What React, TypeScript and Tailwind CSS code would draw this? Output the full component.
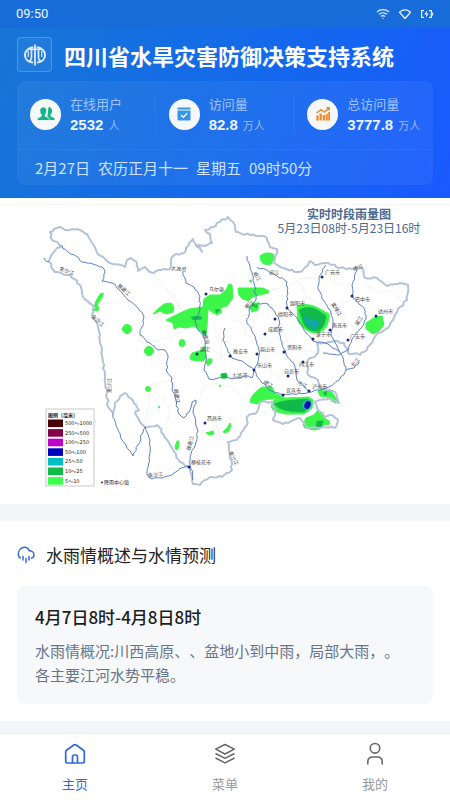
import React from 'react';

type Point = [number, number];

// Adds small kinks between points so that borders and rivers look natural
function wiggle(points: string, size = 1) {
  const pts = points.split(' ').map((p) => p.split(',').map(Number) as Point);
  let seed = 7;
  const rand = () => {
    seed = (seed * 16807) % 2147483647;
    return (seed / 2147483647 - 0.5) * 2 * size;
  };
  let d = `M${pts[0][0]} ${pts[0][1]}`;
  for (let i = 1; i < pts.length; i++) {
    const [ax, ay] = pts[i - 1];
    const [bx, by] = pts[i];
    const steps = Math.max(1, Math.round(Math.hypot(bx - ax, by - ay) / 3));
    for (let s = 1; s <= steps; s++) {
      const t = s / steps;
      const k = s === steps ? 0 : 1;
      d += `L${(ax + (bx - ax) * t + rand() * k).toFixed(1)} ${(ay + (by - ay) * t + rand() * k).toFixed(1)}`;
    }
  }
  return d;
}

const border =
  '49,262 53,253 57,248 62,246 52,240 50,232 54,229 60,227 65,230 72,229 80,230 87,234 91,241 97,253 108,262 125,267 127,260 131,258 137,263 138,271 145,267 153,273 158,270 170,269 172,257 176,254 184,253 189,243 193,239 196,246 202,252 198,245 205,246 212,243 210,234 205,230 213,227 220,222 228,217 233,222 236,232 250,235 260,236 267,238 270,247 277,249 274,263 283,268 298,272 303,270 310,261 315,265 328,263 340,268 353,269 362,268 365,278 377,278 387,286 400,283 408,285 407,300 400,307 393,320 388,328 377,333 373,341 367,350 360,355 348,353 344,343 334,341 317,343 318,353 307,362 308,375 318,380 320,388 335,392 339,403 330,398 315,402 318,410 325,417 332,415 338,420 335,428 323,427 307,428 300,418 283,424 273,420 275,412 272,402 260,402 257,412 247,417 247,425 238,438 228,442 230,455 232,470 222,477 210,477 200,485 193,484 190,468 180,462 172,448 164,435 157,425 145,427 140,422 135,413 139,410 133,401 125,393 115,403 113,413 108,407 105,378 103,362 102,350 98,327 92,315 95,308 83,297 80,285 70,275 55,272 49,262';

const rivers = [
  '44,258 49,262',
  '62,246 68,252 76,256 82,262 90,263 102,267 105,272 102,281 112,283 119,290 128,300 138,308 144,317 142,327 140,335 150,343 158,350 165,350 168,358 167,372 172,378 173,392 179,414 184,418 189,412 192,402 196,400 193,412 198,431 194,448 190,460 193,480',
  '113,413 116,426 122,440 133,456 138,445 145,427 150,440 149,458 147,474 152,479 162,478 174,473 188,466',
  '183,271 186,283 194,287 200,297 199,312 195,322 199,331 205,340 206,355 204,370 209,379 224,378 236,378 246,376 252,378 254,370',
  '247,256 250,266 254,283 256,300 249,310 247,323 255,336 259,350 258,362 254,370 262,383 272,391 283,395 294,394 309,392',
  '257,267 267,270 277,276 287,282 287,308 297,318 306,333 313,341 328,344 340,352',
  '258,303 268,304 275,312 279,320 279,333 282,345 286,354 295,367 297,380 309,392',
  '326,265 319,277 318,289 324,301 331,313 333,325 331,335 336,344 341,354 346,370',
  '357,270 352,285 353,298 364,308 366,319 360,329 352,339 348,350 339,355 323,353',
  '309,392 319,390 331,386 340,379 346,370 354,368 359,362',
  '225,328 223,340 228,352 232,358 242,361 254,370',
];

const counties = [
  '80,292 88,300 100,305 118,302',
  '155,275 168,291 178,303 180,315',
  '150,385 158,383 168,380 172,378',
  '148,385 150,398 147,412 144,422',
  '178,303 185,318 182,330 170,338 150,342',
  '214,327 222,340 220,355 226,365',
  '256,298 270,290 288,286 300,279 316,278',
  '230,318 242,324 246,335',
  '206,355 215,360 228,352',
  '200,400 203,388 214,384 231,387 240,395 246,405',
  '300,283 306,296 322,306 336,305 350,300',
  '330,279 340,285 351,284',
  '366,285 380,292 393,290 401,302',
  '340,306 345,318 338,330 336,340',
  '285,335 292,345 300,351 317,352',
  '262,334 270,343 266,356 272,372 282,380',
  '286,380 292,370 305,367',
  '220,410 216,425 220,438 228,442',
  '163,398 170,410 166,425',
];

const light = '#3df64a';
const mid = '#10b94a';

const cities: [string, number, number, number, number][] = [
  ['马尔康', 206, 294, 209, 291],
  ['康定', 197, 354, 200, 351],
  ['雅安市', 230, 356, 233, 353],
  ['眉山市', 257, 354, 260, 351],
  ['成都市', 265, 334, 268, 331],
  ['德阳市', 275, 319, 278, 316],
  ['绵阳市', 287, 308, 290, 305],
  ['广元市', 322, 277, 325, 274],
  ['巴中市', 352, 296, 355, 301],
  ['达州市', 376, 316, 378, 313],
  ['南充市', 330, 330, 332, 327],
  ['遂宁市', 313, 339, 316, 336],
  ['广安市', 348, 340, 350, 338],
  ['资阳市', 284, 352, 287, 349],
  ['内江市', 303, 362, 299, 366],
  ['自贡市', 288, 376, 284, 373],
  ['乐山市', 254, 370, 257, 367],
  ['宜宾市', 283, 395, 286, 392],
  ['泸州市', 309, 391, 312, 388],
  ['西昌市', 205, 423, 207, 420],
  ['攀枝花市', 189, 467, 191, 464],
];

const riverNames: [string, number, number, number][] = [
  ['金沙江', 59, 270, 20],
  ['雅砻江', 117, 286, 42],
  ['金沙江', 91, 317, 42],
  ['大渡河', 171, 270, 5],
  ['金沙江', 111, 393, -88],
  ['雅砻江', 174, 389, 80],
  ['大渡河', 202, 330, 75],
  ['大渡河', 232, 377, 0],
  ['岷江', 253, 273, 60],
  ['岷江', 246, 309, -30],
  ['涪江', 269, 274, 0],
  ['嘉陵江', 331, 304, 58],
  ['渠江', 358, 326, -60],
  ['南江', 354, 271, -20],
  ['岷江', 263, 383, 30],
  ['沱江', 297, 384, 25],
  ['长江', 353, 367, -45],
  ['雅砻江', 190, 451, -75],
  ['金沙江', 229, 452, 65],
  ['金沙江', 148, 477, -4],
];

const legend: [string, string][] = [
  ['500～1000', '#4a0008'],
  ['250～500', '#82004b'],
  ['100～250', '#c000c8'],
  ['50～100', '#0000c0'],
  ['25～50', '#00bcc4'],
  ['10～25', mid],
  ['5～10', '#3dff4d'],
];

function RainMap() {
  return (
    <svg viewBox="0 198 450 306" className="block w-full" role="img" aria-label="实时时段雨量图">
      <path d="M0 204.500H450" stroke="#f3fbf1" />

      <g fill="none" stroke="#e3dde3" strokeWidth="0.600" strokeDasharray="2 1">
        {counties.map((c, i) => (
          <path key={i} d={wiggle(c, 1)} />
        ))}
      </g>

      <g fill={light} stroke={light} strokeWidth="1" strokeLinejoin="round">
        <path d="M103 293L100 294L96 301L94 307L92 310L98 311L99 308L97 305L103 296Z" />
        <ellipse cx="127" cy="329" rx="4.500" ry="4.500" />
        <ellipse cx="149" cy="351" rx="4.500" ry="4.500" />
        <circle cx="148" cy="389" r="2.500" />
        <circle cx="159" cy="407" r="0.800" />
        <path d="M153 314L158 309L164 304L171 303L174 307L173 312L166 314L160 311Z" />
        <path d="M166 320L178 314L189 309L203 307L204 299L210 295L220 295L226 290L229 284L232 285L233 298L227 306L220 308L222 312L217 315L212 312L208 309L207 325L206 334L202 332L194 326L186 328L179 327L174 329L173 323Z" />
        <path d="M238 288L251 288L263 288L269 291L268 293L259 295L252 297L249 301L243 299L239 295Z" />
        <path d="M252 303L259 303L258 310L252 312L250 308Z" />
        <circle cx="250.500" cy="281" r="1" />
        <path d="M260 256Q266 251 273 254Q276 257 271 264Q264 266 261 261Z" />
        <ellipse cx="182" cy="343" rx="3" ry="3.500" />
        <path d="M190 357L192 353L202 350L204 346L206 358L203 361L191 360Z" />
        <path d="M206 362L208 359L212 359L212 362L208 366Z" />
        <path d="M221 374L227 374L227 378L221 378Z" />
        <circle cx="220" cy="386" r="0.800" />
        <path d="M250 402Q251 394 262 387L272 387L275 393L285 398L272 399Q262 399 257 404Z" />
        <path d="M271 407L274 400L287 398L309 397L313 400L312 408L304 414L286 414L274 411Z" />
        <path d="M318 391L325 389L331 391L334 395L339 403L333 402L327 397L320 396Z" />
        <path d="M306 418L314 415L318 410L323 413L324 418L329 421L330 424L323 425L320 429L314 430L305 428L303 425Z" />
        <path d="M206 433L213 431L214 434L209 435Z" />
        <path d="M223 432L227 428L230 423L231 425L229 431L225 433Z" />
        <path d="M177 441L179 441L178 449L176 450L175 447Z" />
        <path d="M297 306Q308 302 320 309L329 314Q330 320 326 327Q321 334 313 333Q303 330 298 321Z" />
        <path d="M366 323L375 317L382 316L384 325L378 332L373 334L366 329Z" />
      </g>
      <g fill={mid} stroke={mid} strokeWidth="0.500" strokeLinejoin="round">
        <path d="M299 310Q308 304 319 311L326 316Q326 325 319 331Q310 333 304 325Z" />
        <path d="M274 404Q282 400 307 399L311 401L310 407L304 412Q282 413 274 404Z" />
        <path d="M191 317L200 316L202 319L193 320Z" />
        <path d="M202 331L206 332L206 336L202 333Z" />
        <path d="M221 374L226 373L227 377L222 378Z" />
        <path d="M317 421L323 421L322 427L316 427Z" />
        <path d="M253 306L257 304L257 308Z" />
        <path d="M323 393L327 391L326 396Z" />
        <path d="M215 310L220 309L217 313Z" />
      </g>
      <path d="M303 315L309 319L316 320L320 323L314 330L307 325Z" fill="#12a8a8" />
      <ellipse cx="307" cy="405" rx="4.500" ry="5" transform="rotate(25 307 405)" fill="#30b6c6" />
      <ellipse cx="307.500" cy="405" rx="3" ry="4" transform="rotate(25 307.500 405)" fill="#0c10b4" />

      <path d={wiggle(border, 1)} fill="none" stroke="#b4c3d8" strokeWidth="2" strokeLinejoin="round" />
      <g fill="none" stroke="#4a72bd" strokeWidth="0.900">
        {rivers.map((r, i) => (
          <path key={i} d={wiggle(r, 1)} />
        ))}
      </g>

      <g fontSize="5" fill="#444">
        {riverNames.map(([name, x, y, angle], i) => (
          <text key={i} x={x} y={y} transform={`rotate(${angle} ${x} ${y})`}>
            {name}
          </text>
        ))}
        {cities.map(([name, cx, cy, x, y]) => (
          <g key={name}>
            <circle cx={cx} cy={cy} r="1.500" fill="#182a7c" />
            <text x={x} y={y}>{name}</text>
          </g>
        ))}
      </g>

      <g fontSize="12" fill="#4a6a90" textAnchor="middle">
        <text x="349" y="219" fontWeight="700">实时时段雨量图</text>
        <text x="349" y="233">5月23日08时-5月23日16时</text>
      </g>

      <rect x="46" y="409" width="48" height="77" fill="#fff" stroke="#bbb" strokeWidth="0.800" />
      <g fontSize="5" fill="#222">
        <text x="48" y="417" fontWeight="700">图例（毫米）</text>
        {legend.map(([label, color], i) => (
          <g key={label}>
            <rect x="48" y={419.5 + i * 9.6} width="15" height="7.600" fill={color} />
            <text x="65" y={425 + i * 9.6} fontFamily="DejaVu Sans, Noto Sans CJK SC, sans-serif">
              {label}
            </text>
          </g>
        ))}
        <circle cx="102" cy="482.500" r="0.900" />
        <text x="104" y="484">降雨中心值</text>
      </g>
    </svg>
  );
}

function UsersIcon() {
  return (
    <svg viewBox="0 0 18 16" className="w-[18px]" fill="#12b58a">
      <path d="M11.500 1c2.300 0 3.700 1.700 3.600 4-.1 1.700-.8 2.900-1.600 3.700v1.500l3 1.500c.8.400 1.100 1.100 1.100 2.300H10z" />
      <path
        d="M6.300 1c2.300 0 3.500 1.700 3.400 4-.1 1.700-.7 2.900-1.500 3.700v1.500l3 1.500c.8.400 1.200 1.200 1.200 2.800H.2c0-1.600.4-2.400 1.200-2.800l3-1.500V8.700C3.600 7.900 2.900 6.700 2.800 5c-.1-2.300 1.200-4 3.500-4z"
        stroke="#f5f7f9"
        strokeWidth="0.800"
      />
    </svg>
  );
}

function VisitsIcon() {
  return (
    <svg viewBox="0 0 16 16" className="w-4">
      <path d="M1.500 1.500h13v2h-13zM1.500 4.500h13v9a1 1 0 0 1-1 1h-11a1 1 0 0 1-1-1z" fill="#3596e6" />
      <path d="M5 9l2.300 2.300L11.300 7.300" fill="none" stroke="#fff" strokeWidth="1.300" />
    </svg>
  );
}

function TotalIcon() {
  return (
    <svg viewBox="0 0 16 16" className="w-4" fill="#f08a2c">
      <path d="M1.300 9.500h2.300v5H1.300zM4.500 7.500h2.300v7H4.500zM7.700 9H10v5.500H7.700zM10.900 8h1.900v6.500h-1.900zM13.200 6H15v8.500h-1.800z" />
      <path d="M1.500 7L6 3.700L9.500 6L14 2M11.500 1.700h2.800v2.700" fill="none" stroke="#f08a2c" strokeWidth="1.400" />
    </svg>
  );
}

const stats = [
  { label: '在线用户', value: '2532', unit: '人', icon: <UsersIcon /> },
  { label: '访问量', value: '82.8', unit: '万人', icon: <VisitsIcon /> },
  { label: '总访问量', value: '3777.8', unit: '万人', icon: <TotalIcon /> },
];

function StatusBar() {
  return (
    <div className="flex h-7 items-center justify-between bg-[#176cda] px-4 text-[#f0f6ff]">
      <span className="font-[Roboto,sans-serif] text-[13px]">09:50</span>
      <div className="flex items-center gap-2">
        <svg viewBox="0 0 14 12" className="w-3.5" fill="none" stroke="#e6f0ff" strokeWidth="1.200">
          <path d="M1 4a9 9 0 0 1 12 0M3 6.300a6 6 0 0 1 8 0M5 8.500a3 3 0 0 1 4 0" />
          <circle cx="7" cy="10.300" r="0.600" fill="#e6f0ff" stroke="none" />
        </svg>
        <svg viewBox="0 0 14 12" className="w-3.5" fill="none" stroke="#e6f0ff" strokeWidth="1.300" strokeLinejoin="round">
          <path d="M1.500 4.200Q7-.4 12.500 4.200L7 10.500z" />
        </svg>
        <svg viewBox="0 0 14 12" className="w-3.5" fill="none" stroke="#e6f0ff" strokeWidth="1.200">
          <path d="M4 2.600H1.600v6.800H4M9 2.600h2.400v6.800H9M12.600 4.500v3" />
          <path d="M7.200 2.300L4.300 6.500h2l-.5 3.200L8.700 5.500h-2z" fill="#e6f0ff" stroke="none" />
        </svg>
      </div>
    </div>
  );
}

function Header() {
  return (
    <header className="bg-linear-115 from-[#1876d4] to-[#1a59ff]">
      <StatusBar />
      <div className="px-[17px] pt-[9px] pb-[13px]">
        <div className="flex items-center gap-3">
          <div className="flex size-[35px] shrink-0 items-center justify-center rounded-sm border border-white/20 bg-white/5">
            <svg viewBox="0 0 24 24" className="size-6" fill="none" stroke="#dfe9ff">
              <path d="M12 1.500v21" strokeWidth="1.800" />
              <path d="M10.300 4.300C5.500 4.700 2 8 2 12.200c0 4 3.300 6.800 8 7.300M13.700 4.300c4.800.4 8.300 3.700 8.300 7.900 0 4-3.300 6.800-8 7.300" strokeWidth="2" />
              <path d="M5 6.300h14" strokeWidth="1.600" />
              <path d="M8.500 6v8.500q0 2.500-2 3.800M15.500 6v8.500q0 2.500 2 3.800" strokeWidth="1.700" />
              <path d="M5.300 8v6M18.700 8v6" strokeWidth="1.200" />
            </svg>
          </div>
          <h1 className="text-[22px] leading-8 font-bold whitespace-nowrap text-white">四川省水旱灾害防御决策支持系统</h1>
        </div>

        <div className="mt-[9px] rounded-lg bg-white/5">
          <div className="grid grid-cols-3 pt-[14px] pb-4">
            {stats.map((s, i) => (
              <div
                key={s.label}
                className={i < 2 ? 'flex items-center gap-[9px] border-r border-white/5 pl-[13px]' : 'flex items-center gap-[9px] pl-[13px]'}
              >
                <div className="flex size-[31px] shrink-0 items-center justify-center rounded-full bg-[#f5f7f9]">{s.icon}</div>
                <div className="whitespace-nowrap">
                  <div className="text-[13px] leading-[18px] text-[#a0c3fa]">{s.label}</div>
                  <div className="flex items-baseline gap-[5px] pt-1 leading-4">
                    <span className="font-['Liberation_Sans',sans-serif] text-[15px] font-bold text-[#eaf2ff]">{s.value}</span>
                    <span className="text-[11px] text-[#95bbfa]">{s.unit}</span>
                  </div>
                </div>
              </div>
            ))}
          </div>
          <div className="flex gap-2 border-t border-white/5 px-[18px] pt-[6px] pb-[5px] text-[15px] leading-6 text-[#cfe2ff]">
            <span>2月27日</span>
            <span>农历正月十一</span>
            <span>星期五</span>
            <span>09时50分</span>
          </div>
        </div>
      </div>
    </header>
  );
}

function Overview() {
  return (
    <section className="bg-white px-[17px] pt-5 pb-[17px]">
      <div className="flex items-center gap-[11px]">
        <svg viewBox="0 0 18 18" className="size-[18px]" fill="none" stroke="#3a6ae0" strokeWidth="1.500" strokeLinecap="round">
          <path d="M3.300 12A4.200 4.200 0 0 1 1.200 8.300C1.200 4.500 4 1.300 7.500 1.300c2.300 0 4 1.300 4.700 3.500 2.600-.2 4.800 1.400 4.800 3.900 0 1.800-1 3-2.500 3.500" />
          <path d="M6 10.500v3.500M9 12.500v4M12 10.500v3.500" />
        </svg>
        <h2 className="text-[17px] leading-7 text-[#222]">水雨情概述与水情预测</h2>
      </div>
      <div className="mt-[17px] rounded-lg bg-[#f6f8fa] px-[18px] pt-[17px] pb-[17px]">
        <h3 className="text-[17px] leading-7 font-medium text-[#1c1c1c]">4月7日8时-4月8日8时</h3>
        <p className="mt-2 text-[15px] leading-6 text-[#6a7488] [text-spacing-trim:space-all]">
          水雨情概况:川西高原、、盆地小到中雨，局部大雨，。
          <br />
          各主要江河水势平稳。
        </p>
      </div>
    </section>
  );
}

function TabBar() {
  return (
    <nav className="sticky bottom-0 grid h-[67px] grid-cols-3 border-t border-[#e8eaee] bg-white text-[13px] leading-5 text-[#999]">
      <button type="button" className="flex flex-col items-center gap-2 pt-2 text-[#3468d8]">
        <svg viewBox="0 0 24 24" className="size-6" fill="none" stroke="#3468d8" strokeWidth="1.700" strokeLinejoin="round">
          <path d="M2.700 9.800Q2.700 8.800 3.500 8.200L10.800 3q1.200-.8 2.400 0l7.300 5.200q.8.600.8 1.600v9.400q0 1.800-1.800 1.800H4.500q-1.800 0-1.800-1.800z" />
          <path d="M9.500 21v-6.300q0-1.700 1.700-1.700h1.600q1.700 0 1.700 1.700V21" />
        </svg>
        主页
      </button>
      <button type="button" className="flex flex-col items-center gap-2 pt-2">
        <svg viewBox="0 0 24 24" className="size-6" fill="none" stroke="#666" strokeWidth="1.500" strokeLinejoin="round">
          <path d="M12 2.500l9.300 4.700L12 12 2.700 7.200z" />
          <path d="M2.500 11.500L12 16.300l9.500-4.800M2.500 16L12 20.800l9.500-4.800" />
        </svg>
        菜单
      </button>
      <button type="button" className="flex flex-col items-center gap-2 pt-2">
        <svg viewBox="0 0 24 24" className="size-6" fill="none" stroke="#666" strokeWidth="1.600">
          <circle cx="12" cy="6.300" r="4.800" />
          <path d="M4.800 22.500v-2.700q0-4.800 4.800-4.800h4.800q4.800 0 4.800 4.800v2.700" />
        </svg>
        我的
      </button>
    </nav>
  );
}

export default function App() {
  return (
    <div className="flex min-h-screen flex-col bg-[#f4f5f9] font-['Noto_Sans_CJK_SC',sans-serif]">
      <Header />
      <main className="flex-1">
        <div className="mb-[17px] bg-white">
          <RainMap />
        </div>
        <Overview />
      </main>
      <TabBar />
    </div>
  );
}
